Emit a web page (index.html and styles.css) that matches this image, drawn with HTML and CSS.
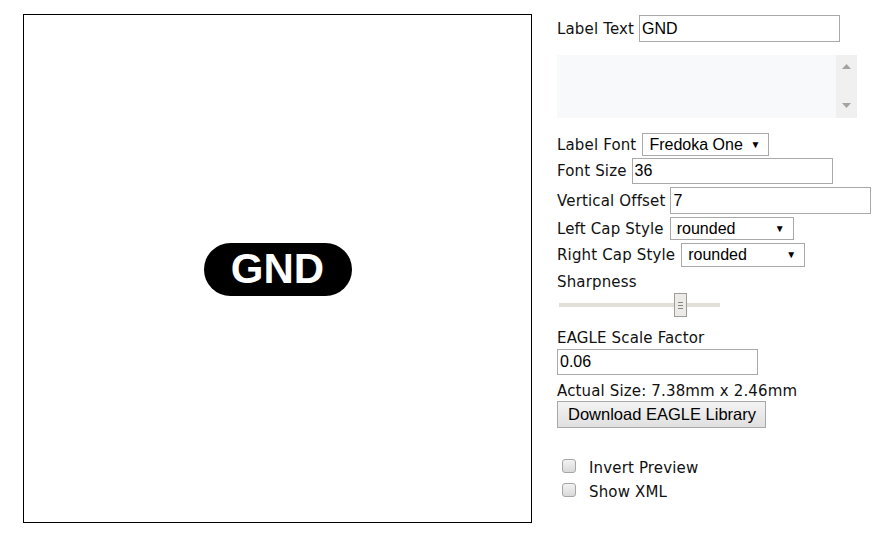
FILE: index.html
```html
<!DOCTYPE html>
<html lang="en">
<head>
    <meta charset="UTF-8">
    <title>EAGLE Label Maker</title>
    <link rel="stylesheet" href="styles.css">
</head>
<body>
    <div class="page">
        <div class="preview">
            <div class="label-pill">GND</div>
        </div>
        <div class="controls">
            <div class="row">
                <span>Label Text</span>
                <input class="text-input" type="text" value="GND">
            </div>
            <div class="xml-box">
                <textarea class="xml-area"></textarea>
                <div class="scroll">
                    <svg width="9" height="5" viewBox="0 0 9 5"><polygon points="0,5 4.5,0 9,5" fill="#a3a3a3"/></svg>
                    <svg width="9" height="5" viewBox="0 0 9 5"><polygon points="0,0 9,0 4.5,5" fill="#a3a3a3"/></svg>
                </div>
            </div>
            <div class="row row-font">
                <span>Label Font</span>
                <span class="select select-font">Fredoka One</span>
            </div>
            <div class="row row-size">
                <span>Font Size</span>
                <input class="text-input" type="text" value="36">
            </div>
            <div class="row row-offset">
                <span>Vertical Offset</span>
                <input class="text-input" type="text" value="7">
            </div>
            <div class="row row-left">
                <span>Left Cap Style</span>
                <span class="select select-cap">rounded</span>
            </div>
            <div class="row row-right">
                <span>Right Cap Style</span>
                <span class="select select-cap">rounded</span>
            </div>
            <div class="caption cap-sharp">Sharpness</div>
            <div class="slider">
                <div class="track"></div>
                <div class="thumb"><i></i><i></i><i></i></div>
            </div>
            <div class="caption cap-scale">EAGLE Scale Factor</div>
            <input class="text-input scale-input" type="text" value="0.06">
            <div class="caption cap-actual">Actual Size: 7.38mm x 2.46mm</div>
            <button class="download">Download EAGLE Library</button>
            <label class="check check-first"><span class="box"></span>Invert Preview</label>
            <label class="check"><span class="box"></span>Show XML</label>
        </div>
    </div>
</body>
</html>
```

FILE: styles.css
```css
body {
    margin: 0;
    font-family: "DejaVu Sans", Verdana, sans-serif;
    font-size: 15px;
    letter-spacing: 0.15px;
    color: #111;
    background: white;
}
.page {
    display: flex;
    align-items: flex-start;
    padding: 14px 0 0 23px;
}
.preview {
    width: 507px;
    height: 507px;
    border: 1px solid black;
    display: flex;
    align-items: center;
    justify-content: center;
}
.label-pill {
    width: 148px;
    height: 53px;
    margin-top: 1px;
    border-radius: 27px;
    background: black;
    color: white;
    font-family: "Liberation Sans", Arial, sans-serif;
    font-weight: bold;
    font-size: 42px;
    letter-spacing: 0;
    display: flex;
    align-items: center;
    justify-content: center;
}
.controls {
    margin-left: 25px;
    margin-top: 1px;
    display: flex;
    flex-direction: column;
    align-items: flex-start;
}
.row {
    display: flex;
    align-items: center;
    gap: 5px;
    height: 27px;
}
.text-input {
    box-sizing: border-box;
    width: 201px;
    height: 27px;
    margin: 0;
    padding: 1px 2px;
    border: 1px solid #a9a9a9;
    font-family: "Liberation Sans", Arial, sans-serif;
    font-size: 16px;
    letter-spacing: 0;
    color: black;
}
.xml-box {
    display: flex;
    width: 300px;
    height: 63px;
    margin-top: 13px;
    background: #f8f9fb;
}
.xml-area {
    flex: 1;
    border: none;
    resize: none;
    background: transparent;
    margin: 0;
    padding: 0;
}
.scroll {
    width: 21px;
    background: #f0f0f0;
    display: flex;
    flex-direction: column;
    align-items: center;
    justify-content: space-between;
    padding: 9px 0 10px;
    box-sizing: border-box;
}
.row-font {
    margin-top: 15px;
    height: 23px;
}
.row-size {
    margin-top: 2px;
    height: 26px;
}
.row-size .text-input {
    height: 26px;
}
.row-offset {
    margin-top: 3px;
}
.row-left {
    margin-top: 3px;
    height: 23px;
}
.row-right {
    margin-top: 3px;
    height: 24px;
}
.select {
    position: relative;
    box-sizing: border-box;
    height: 23px;
    margin-left: 1px;
    padding: 0 0 0 6px;
    border: 1px solid #a9a9a9;
    font-family: "Liberation Sans", Arial, sans-serif;
    font-size: 16px;
    letter-spacing: 0;
    line-height: 21px;
    color: black;
}
.select::after {
    content: "\25BC";
    position: absolute;
    right: 8px;
    top: 0;
    font-size: 10px;
}
.select-font {
    width: 127px;
}
.select-cap {
    width: 124px;
}
.row-right .select {
    height: 24px;
}
.caption {
    height: 18px;
    line-height: 18px;
}
.cap-sharp {
    margin-top: 6px;
}
.slider {
    position: relative;
    width: 161px;
    height: 24px;
    margin: 2px 0 0 2px;
}
.track {
    height: 4px;
    margin-top: 10px;
    background: #e2ded8;
}
.thumb {
    position: absolute;
    left: 115px;
    top: 0;
    width: 11px;
    height: 22px;
    border: 1px solid #a09c97;
    background: #edebe8;
    display: flex;
    flex-direction: column;
    align-items: center;
    justify-content: center;
    gap: 2px;
}
.thumb i {
    width: 5px;
    height: 1px;
    background: #8a8681;
}
.cap-scale {
    margin-top: 12px;
}
.scale-input {
    height: 26px;
    margin-top: 2px;
}
.cap-actual {
    margin-top: 7px;
}
.download {
    margin-top: 1px;
    height: 27px;
    padding: 0 9px 0 10px;
    border: 1px solid #a8a8a8;
    border-radius: 0;
    background: linear-gradient(#f3f3f3, #e0e0e0);
    font-family: "Liberation Sans", Arial, sans-serif;
    font-size: 16.5px;
    letter-spacing: 0;
    color: black;
}
.check {
    display: flex;
    align-items: center;
    height: 18px;
    margin-top: 6px;
}
.check-first {
    margin-top: 31px;
}
.box {
    box-sizing: border-box;
    width: 14px;
    height: 14px;
    margin: 0 13px 0 5px;
    position: relative;
    top: -2px;
    border: 1px solid #a6a6a6;
    border-radius: 3px;
    background: linear-gradient(#f2f2f2, #d9d9d9);
}
```
